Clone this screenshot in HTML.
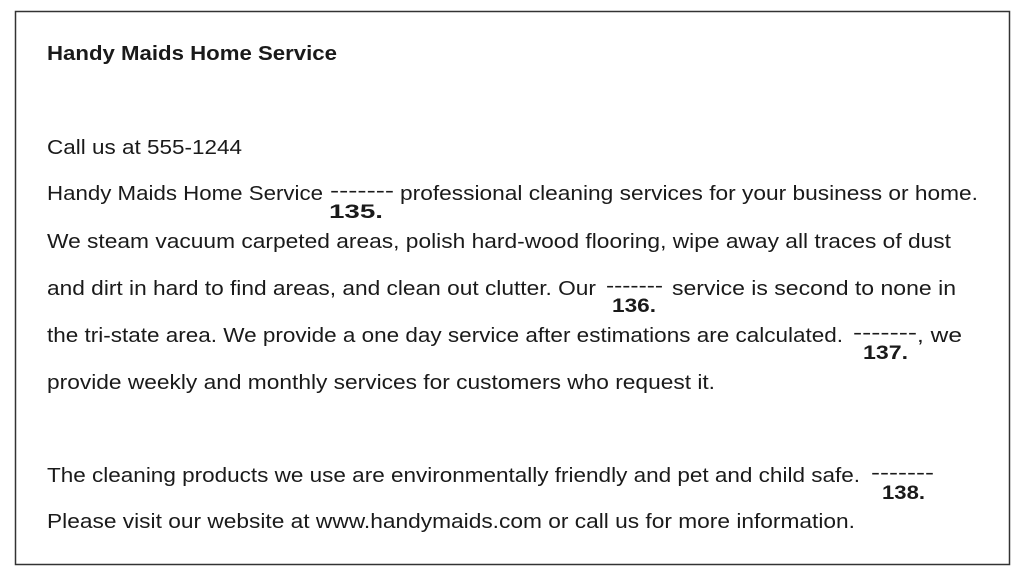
<!DOCTYPE html>
<html><head><meta charset="utf-8"><style>
html,body{margin:0;padding:0;background:#fff;width:1024px;height:573px;overflow:hidden}
svg{display:block}
text{font-family:"Liberation Sans",Arial,sans-serif;fill:#1a1a1a;font-size:20.5px}
.b{font-weight:bold}
.n{font-weight:bold;font-size:19.5px}
</style></head><body>
<svg width="1024" height="573" viewBox="0 0 1024 573">
<rect x="15.5" y="11.5" width="994" height="553" fill="#fff" stroke="#333" stroke-width="1.5"/>
<text class="b" x="47" y="60" textLength="290" lengthAdjust="spacingAndGlyphs">Handy Maids Home Service</text>
<text x="47" y="154" textLength="195" lengthAdjust="spacingAndGlyphs">Call us at 555-1244</text>

<text x="47" y="200" textLength="276" lengthAdjust="spacingAndGlyphs">Handy Maids Home Service</text>
<text x="330" y="197" textLength="64" lengthAdjust="spacingAndGlyphs">-------</text>
<text x="400" y="200" textLength="578" lengthAdjust="spacingAndGlyphs">professional cleaning services for your business or home.</text>
<text class="n" x="329" y="218" textLength="54" lengthAdjust="spacingAndGlyphs">135.</text>

<text x="47" y="248" textLength="904" lengthAdjust="spacingAndGlyphs">We steam vacuum carpeted areas, polish hard-wood flooring, wipe away all traces of dust</text>

<text x="47" y="295" textLength="549" lengthAdjust="spacingAndGlyphs">and dirt in hard to find areas, and clean out clutter. Our</text>
<text x="606" y="292" textLength="57" lengthAdjust="spacingAndGlyphs">-------</text>
<text x="672" y="295" textLength="284" lengthAdjust="spacingAndGlyphs">service is second to none in</text>
<text class="n" x="612" y="312" textLength="44" lengthAdjust="spacingAndGlyphs">136.</text>

<text x="47" y="342" textLength="796" lengthAdjust="spacingAndGlyphs">the tri-state area. We provide a one day service after estimations are calculated.</text>
<text x="853" y="339" textLength="64" lengthAdjust="spacingAndGlyphs">-------</text>
<text x="917" y="342" textLength="45" lengthAdjust="spacingAndGlyphs">, we</text>
<text class="n" x="863" y="359" textLength="45" lengthAdjust="spacingAndGlyphs">137.</text>

<text x="47" y="389" textLength="668" lengthAdjust="spacingAndGlyphs">provide weekly and monthly services for customers who request it.</text>

<text x="47" y="482" textLength="813" lengthAdjust="spacingAndGlyphs">The cleaning products we use are environmentally friendly and pet and child safe.</text>
<text x="871" y="479" textLength="63" lengthAdjust="spacingAndGlyphs">-------</text>
<text class="n" x="882" y="499" textLength="43" lengthAdjust="spacingAndGlyphs">138.</text>

<text x="47" y="528" textLength="808" lengthAdjust="spacingAndGlyphs">Please visit our website at www.handymaids.com or call us for more information.</text>
</svg>
</body></html>
